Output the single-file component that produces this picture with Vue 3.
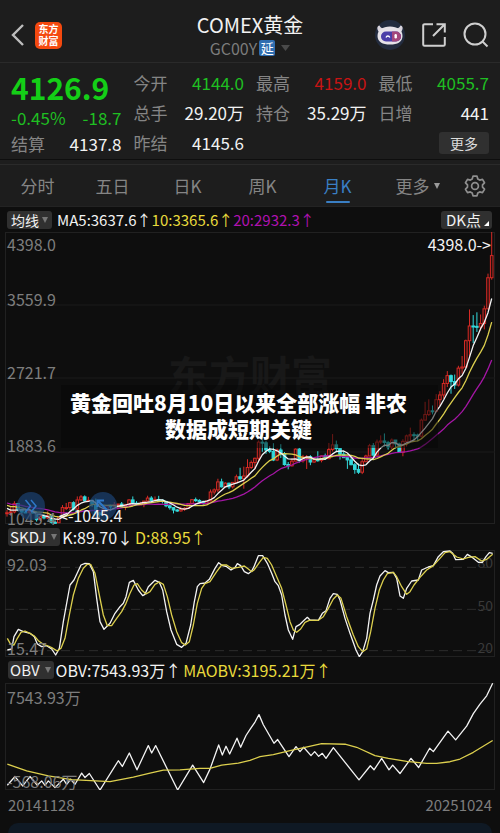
<script setup>
import { computed, ref } from 'vue'

const quoteColumns = [
  [
    { label: '今开', value: '4144.0', tone: 'down' },
    { label: '总手', value: '29.20万', tone: 'plain' },
    { label: '昨结', value: '4145.6', tone: 'plain' },
  ],
  [
    { label: '最高', value: '4159.0', tone: 'up' },
    { label: '持仓', value: '35.29万', tone: 'plain' },
  ],
  [
    { label: '最低', value: '4055.7', tone: 'down' },
    { label: '日增', value: '441', tone: 'plain' },
  ],
]

const tabs = ['分时', '五日', '日K', '周K', '月K']
const activeTab = ref('月K')

const PRICE_MAX = 4398
const PRICE_MIN = 1045.4
const CHART_HEIGHT = 292
const CANDLE_STEP = 3.7

// Closes before the first visible month, needed by the moving averages
const history = [
  1472, 1393, 1224, 1312, 1396, 1327, 1324, 1251, 1202, 1240,
  1321, 1284, 1296, 1246, 1322, 1281, 1285, 1211, 1171,
]

// Monthly [close, high, low]
const months = [
  [1175, 1208, 1130], [1184, 1239, 1141],
  [1279, 1307, 1167], [1213, 1286, 1190], [1183, 1223, 1141], [1182, 1224, 1175],
  [1190, 1232, 1162], [1172, 1205, 1162], [1095, 1188, 1073], [1133, 1170, 1080],
  [1115, 1157, 1098], [1141, 1191, 1103], [1065, 1146, 1051], [1060, 1088, 1045.4],
  [1118, 1128, 1061], [1234, 1263, 1115], [1234, 1287, 1206], [1290, 1299, 1205],
  [1217, 1306, 1199], [1322, 1362, 1199], [1357, 1377, 1310], [1311, 1374, 1301],
  [1317, 1357, 1305], [1273, 1322, 1243], [1173, 1338, 1170], [1152, 1188, 1123],
  [1211, 1220, 1146], [1253, 1264, 1200], [1249, 1264, 1194], [1268, 1297, 1240],
  [1275, 1275, 1214], [1242, 1298, 1236], [1270, 1270, 1204], [1322, 1331, 1252],
  [1284, 1362, 1281], [1270, 1308, 1262], [1276, 1301, 1264], [1309, 1309, 1238],
  [1343, 1370, 1305], [1317, 1365, 1307], [1327, 1362, 1303], [1319, 1369, 1301],
  [1304, 1328, 1281], [1254, 1313, 1238], [1233, 1266, 1210], [1206, 1226, 1167],
  [1196, 1218, 1184], [1215, 1246, 1186], [1226, 1239, 1196], [1281, 1284, 1221],
  [1325, 1331, 1277], [1316, 1349, 1300], [1298, 1330, 1281], [1285, 1314, 1267],
  [1311, 1311, 1267], [1413, 1442, 1305], [1437, 1454, 1384], [1529, 1565, 1412],
  [1472, 1566, 1465], [1514, 1525, 1465], [1472, 1519, 1446], [1523, 1528, 1453],
  [1588, 1613, 1519], [1566, 1691, 1551], [1596, 1704, 1451], [1694, 1789, 1576],
  [1751, 1775, 1676], [1800, 1807, 1671], [1985, 2005, 1766], [1978, 2089, 1874],
  [1895, 2001, 1851], [1879, 1939, 1859], [1780, 1973, 1767], [1895, 1912, 1767],
  [1850, 1962, 1804], [1728, 1872, 1715], [1713, 1757, 1673], [1767, 1800, 1706],
  [1905, 1913, 1766], [1771, 1919, 1750], [1817, 1839, 1750], [1818, 1837, 1677],
  [1757, 1836, 1721], [1783, 1815, 1746], [1776, 1881, 1761], [1828, 1833, 1753],
  [1796, 1854, 1780], [1900, 1976, 1788], [1954, 2078, 1878], [1911, 2003, 1870],
  [1848, 1910, 1785], [1807, 1882, 1803], [1781, 1816, 1678], [1726, 1824, 1720],
  [1672, 1746, 1622], [1640, 1739, 1621], [1760, 1792, 1618], [1826, 1841, 1778],
  [1945, 1966, 1826], [1836, 1975, 1810], [1986, 2015, 1813], [1999, 2063, 1965],
  [1982, 2085, 1932], [1929, 2000, 1900], [2009, 2028, 1909], [1965, 2010, 1913],
  [1866, 1980, 1862], [1994, 2019, 1823], [2057, 2072, 1935], [2071, 2152, 1987],
  [2067, 2098, 2004], [2054, 2083, 1996], [2238, 2256, 2039], [2302, 2448, 2249],
  [2345, 2477, 2285], [2339, 2406, 2304], [2473, 2537, 2327], [2527, 2570, 2403],
  [2659, 2708, 2485], [2749, 2801, 2618], [2681, 2762, 2541], [2641, 2761, 2596],
  [2835, 2862, 2624], [2848, 2974, 2770], [3150, 3162, 2844], [3319, 3509, 2970],
  [3315, 3444, 3123], [3307, 3476, 3250], [3348, 3451, 3268], [3516, 3552, 3280],
  [3873, 3920, 3510], [4126.9, 4398, 3850],
]

const toX = (index) => 2 + index * CANDLE_STEP
const toY = (price) => ((PRICE_MAX - price) / (PRICE_MAX - PRICE_MIN)) * CHART_HEIGHT

const closes = [...history, ...months.map(([close]) => close)]

const candles = computed(() =>
  months.map(([close, high, low], i) => {
    const open = closes[history.length + i - 1]
    const top = toY(Math.max(open, close))
    const bottom = toY(Math.min(open, close))
    return {
      x: toX(i),
      high: toY(high),
      low: toY(low),
      top,
      bottom,
      body: Math.max(bottom - top, 1),
      rising: close >= open,
    }
  }),
)

const movingAverage = (size) =>
  months
    .map((_, i) => {
      const end = history.length + i + 1
      const slice = closes.slice(end - size, end)
      const mean = slice.reduce((sum, n) => sum + n, 0) / size
      return `${toX(i).toFixed(1)},${toY(mean).toFixed(1)}`
    })
    .join(' ')

const averages = [
  { name: 'violet', points: movingAverage(20) },
  { name: 'yellow', points: movingAverage(10) },
  { name: 'white', points: movingAverage(5) },
]

const kLine =
  '22,375 35,372 42,335 55,313 70,320 90,325 103,335 112,357 125,365 140,362 155,372 167,390 178,370 190,290 210,180 222,165 243,120 255,115 268,116 280,140 290,220 300,290 312,313 330,295 345,265 360,245 370,235 378,215 388,172 400,166 415,195 428,212 435,208 445,185 465,166 478,172 488,195 500,260 513,315 530,358 545,367 558,355 572,300 583,230 592,185 600,176 615,174 628,163 645,130 656,113 668,122 680,125 693,135 705,128 712,116 722,122 733,140 745,146 755,138 762,125 775,92 788,92 802,115 815,145 825,170 835,182 845,210 855,270 865,315 878,343 888,305 900,298 910,288 922,277 930,285 955,286 967,265 978,257 990,220 1000,206 1012,208 1020,225 1035,280 1050,325 1068,375 1078,395 1088,380 1100,340 1110,265 1120,225 1130,180 1140,153 1155,137 1165,143 1180,142 1190,160 1200,213 1210,220 1220,190 1235,168 1255,165 1265,135 1285,126 1300,122 1315,95 1330,80 1350,78 1358,85 1367,104 1390,103 1402,88 1418,98 1435,112 1447,112 1458,95 1468,83 1478,85'
const dLine =
  '22,340 32,358 42,360 52,340 63,322 75,318 90,325 103,333 115,347 130,358 145,363 155,368 172,378 183,370 195,340 208,270 220,210 235,160 250,130 262,118 272,118 285,145 298,210 310,270 322,302 335,302 350,280 365,260 378,235 390,205 402,180 412,176 425,195 438,207 450,200 465,178 478,171 490,178 502,215 515,270 530,320 545,353 556,360 568,350 580,300 592,235 605,190 615,176 630,170 650,140 665,120 680,120 695,130 715,127 733,123 745,132 755,140 762,135 780,110 790,97 802,100 815,120 830,155 845,190 858,240 870,290 880,315 890,322 902,312 915,292 928,286 955,286 970,275 985,250 1000,222 1012,210 1023,220 1040,275 1060,330 1075,365 1088,380 1100,372 1112,320 1125,250 1138,195 1150,165 1162,146 1180,142 1190,155 1205,185 1220,208 1230,200 1242,180 1260,157 1280,135 1300,122 1320,100 1335,83 1350,80 1370,96 1390,102 1405,97 1425,95 1445,108 1460,103 1478,88'
const obvLine =
  '22,388 45,362 68,390 90,362 112,388 125,375 135,388 145,375 165,395 190,370 200,385 212,370 225,385 245,352 255,365 268,353 300,402 355,315 367,332 388,292 411,342 445,270 455,292 467,270 533,402 578,328 611,380 630,340 656,268 667,298 678,272 689,295 711,248 722,275 738,240 750,222 765,200 777,178 790,208 822,263 833,252 867,303 888,273 900,288 911,275 933,300 944,288 956,302 967,293 978,308 1000,276 1077,372 1111,330 1122,342 1145,308 1167,342 1178,328 1200,353 1233,308 1256,335 1289,278 1300,288 1344,227 1367,253 1400,212 1420,175 1440,147 1460,122 1478,85'
const maObvLine =
  '22,325 80,345 145,360 215,371 330,377 400,364 450,352 490,343 540,342 600,338 630,338 665,328 715,322 750,314 780,303 820,297 870,285 925,273 965,264 1035,266 1070,275 1125,300 1165,308 1220,317 1280,323 1310,323 1350,318 1380,310 1420,290 1478,255'
</script>

<template>
  <main class="page">
    <header class="header">
      <div class="header__side">
        <button class="icon-button" type="button" aria-label="返回">
          <svg width="14" height="24" viewBox="0 0 14 24">
            <path d="M12 2 2 12l10 10" fill="none" stroke="#bdbdbd" stroke-width="2.4" />
          </svg>
        </button>
        <div class="logo"><span>东方</span><span>财富</span></div>
      </div>
      <div class="header__center">
        <h1 class="header__title">COMEX黄金</h1>
        <div class="header__code">
          <span>GC00Y</span>
          <span class="header__badge">延</span>
          <svg class="header__caret" width="9" height="6" viewBox="0 0 9 6">
            <path d="M0 0h9L4.5 6z" fill="#4a4a4a" />
          </svg>
        </div>
      </div>
      <div class="header__side header__side--right">
        <button class="icon-button" type="button" aria-label="助手">
          <svg width="30" height="30" viewBox="0 0 30 30">
            <circle cx="15" cy="15" r="15" fill="#232c3f" />
            <path d="M4 12C1.500 9 2 6 4.500 5.500c1 2.500 3 3 5.500 3M26 12c2.500-3 2-6-.5-6.500-1 2.500-3 3-5.500 3" fill="#d9d4dc" />
            <path d="M15 6.500c7.500 0 12.500 3.500 12.500 9.500 0 6-5 8.500-12.500 8.500S2.500 22 2.500 16C2.500 10 7.500 6.500 15 6.500z" fill="#e6e2e8" />
            <rect x="6" y="11.500" width="20" height="10" rx="5" fill="#4a3da8" />
            <path d="M17 11.500h4a5 5 0 0 1 0 10h-4z" fill="#a3477c" />
            <path d="M11 17.500c.8-2 3-2 3.800 0" fill="none" stroke="#fff" stroke-width="1.3" />
            <rect x="19.500" y="14" width="2.400" height="4.500" rx="1.200" fill="#fff" />
          </svg>
        </button>
        <button class="icon-button" type="button" aria-label="分享">
          <svg width="24" height="24" viewBox="0 0 24 24" fill="none" stroke="#cfcfcf" stroke-width="2">
            <path d="M11 1.200H2.500a1.300 1.300 0 0 0-1.300 1.300v19a1.300 1.300 0 0 0 1.300 1.300h19a1.300 1.300 0 0 0 1.300-1.300V14M14.500 1.200h8.300v8.300M22.500 1.500 11 13" />
          </svg>
        </button>
        <button class="icon-button" type="button" aria-label="搜索">
          <svg width="26" height="26" viewBox="0 0 26 26" fill="none" stroke="#cfcfcf" stroke-width="2">
            <circle cx="12" cy="12" r="10.5" />
            <path d="m19.500 19.500 5 5" />
          </svg>
        </button>
      </div>
    </header>

    <section class="quote">
      <div class="quote__column">
        <strong class="quote__price">4126.9</strong>
        <div class="quote__change"><span>-0.45%</span><span>-18.7</span></div>
        <div class="quote__row">
          <span class="quote__label">结算</span>
          <span class="quote__value quote__value--plain">4137.8</span>
        </div>
      </div>
      <div v-for="(column, i) in quoteColumns" :key="i" class="quote__column">
        <div v-for="item in column" :key="item.label" class="quote__row">
          <span class="quote__label">{{ item.label }}</span>
          <span :class="['quote__value', `quote__value--${item.tone}`]">{{ item.value }}</span>
        </div>
        <div v-if="i === 2" class="quote__row quote__row--end">
          <button class="quote__more" type="button">更多</button>
        </div>
      </div>
    </section>

    <nav class="tabs">
      <button
        v-for="tab in tabs"
        :key="tab"
        type="button"
        :class="['tabs__item', { 'tabs__item--active': tab === activeTab }]"
        @click="activeTab = tab"
      >
        {{ tab }}
      </button>
      <button class="tabs__item tabs__item--more" type="button">
        更多
        <svg width="6" height="6" viewBox="0 0 6 6"><path d="M0 0h6L3 6z" fill="#9a9a9a" /></svg>
      </button>
      <button class="tabs__settings" type="button" aria-label="设置">
        <svg width="22" height="22" viewBox="0 0 22 22" fill="none" stroke="#8f8f8f" stroke-width="1.7" stroke-linejoin="round">
          <path d="M9 1.200h4l.8 2.800 1.900 1.100 2.800-.7 2 3.400-2 2.100v2.200l2 2.100-2 3.400-2.800-.7-1.900 1.100-.8 2.800H9L8.200 18l-1.900-1.100-2.800.7-2-3.400 2-2.100V9.900l-2-2.100 2-3.400 2.800.7L8.200 4z" />
          <circle cx="11" cy="11" r="3.4" />
        </svg>
      </button>
    </nav>

    <section class="charts">
      <div class="legend legend--main">
        <button class="chip" type="button">
          均线<svg width="6" height="6" viewBox="0 0 6 6"><path d="M0 0h6L3 6z" fill="#777" /></svg>
        </button>
        <span class="legend__values">
          <span>MA5:3637.6↑</span><span class="is-yellow">10:3365.6↑</span><span class="is-violet">20:2932.3↑</span>
        </span>
        <button class="chip chip--corner" type="button">
          DK点<svg width="5" height="5" viewBox="0 0 5 5"><path d="M5 0v5H0z" fill="#fff" /></svg>
        </button>
      </div>

      <div class="pane pane--price">
        <span class="watermark">东方财富</span>
        <svg class="plot" viewBox="0 0 490 292" preserveAspectRatio="none">
          <path class="grid-line" d="M0 73h490M0 146h490M0 220h490" />
          <g v-for="(c, i) in candles" :key="i" :class="c.rising ? 'candle-up' : 'candle-down'">
            <path :d="`M${c.x} ${c.high}V${c.top}M${c.x} ${c.bottom}V${c.low}`" />
            <rect :x="c.x - 1.3" :y="c.top" width="2.6" :height="c.body" />
          </g>
          <polyline
            v-for="line in averages"
            :key="line.name"
            :class="['line', `line--${line.name}`]"
            :points="line.points"
          />
        </svg>
        <span class="axis-top">4398.0</span>
        <div class="axis">
          <span>3559.9</span>
          <span>2721.7</span>
          <span>1883.6</span>
          <span>1045.4</span>
        </div>
        <span class="mark mark--high">4398.0-&gt;</span>
        <button class="round round--forward" type="button" aria-label="快进">
          <svg width="14" height="14" viewBox="0 0 14 14" fill="none" stroke="#2e78c8" stroke-width="1.5">
            <path d="m1.500 1 5 6-5 6M7 1l5 6-5 6" />
          </svg>
        </button>
        <button class="round round--expand" type="button" aria-label="展开">
          <svg width="14" height="14" viewBox="0 0 14 14" fill="none" stroke="#2e78c8" stroke-width="2">
            <path d="M1.500 8V1.500H8M2 2l9 9" />
          </svg>
        </button>
        <span class="mark mark--low">&lt;-1045.4</span>
        <p class="caption">黄金回吐8月10日以来全部涨幅 非农<br />数据成短期关键</p>
      </div>

      <div class="legend">
        <button class="chip chip--wide" type="button">
          SKDJ<svg width="6" height="6" viewBox="0 0 6 6"><path d="M0 0h6L3 6z" fill="#777" /></svg>
        </button>
        <span class="legend__values legend__values--spaced">
          <span>K:89.70↓</span><span class="is-yellow">D:88.95↑</span>
        </span>
      </div>
      <div class="pane pane--sub">
        <div class="axis-right"><span>80</span><span>50</span><span>20</span></div>
        <svg class="plot" viewBox="15 75 1470 321" preserveAspectRatio="none">
          <path class="grid-line grid-line--dashed" d="M15 127h1470M15 253h1470M15 377h1470" />
          <polyline class="line line--white" :points="kLine" />
          <polyline class="line line--yellow" :points="dLine" />
        </svg>
        <span class="axis-top">92.03</span>
        <span class="axis-bottom">15.47</span>
      </div>

      <div class="legend">
        <button class="chip chip--wide" type="button">
          OBV<svg width="6" height="6" viewBox="0 0 6 6"><path d="M0 0h6L3 6z" fill="#777" /></svg>
        </button>
        <span class="legend__values legend__values--spaced">
          <span>OBV:7543.93万↑</span><span class="is-yellow">MAOBV:3195.21万↑</span>
        </span>
      </div>
      <div class="pane pane--sub">
        <svg class="plot" viewBox="15 84 1470 318" preserveAspectRatio="none">
          <polyline class="line line--white" :points="obvLine" />
          <polyline class="line line--yellow" :points="maObvLine" />
        </svg>
        <span class="axis-top">7543.93万</span>
        <span class="axis-bottom">-568.06万</span>
      </div>

      <div class="dates"><span>20141128</span><span>20251024</span></div>
    </section>

    <div class="sheet"></div>
  </main>
</template>

<style>
body {
  background: #0e0e0e;
}
</style>

<style scoped>
.page {
  display: flex;
  flex-direction: column;
  min-height: 100vh;
  overflow: hidden;
  background: #0e0e0e;
  color: #f2f2f2;
  font-family: 'Noto Sans CJK SC', 'Noto Sans', sans-serif;
}

button {
  margin: 0;
  padding: 0;
  border: none;
  background: none;
  color: inherit;
  font: inherit;
  cursor: pointer;
}

svg {
  display: block;
}

.header {
  display: grid;
  grid-template-columns: 1fr auto 1fr;
  align-items: center;
  height: 54px;
  padding: 8px 11px 0;
  border-bottom: 1px solid #2a2a2a;
  background: #1d1d1d;
}

.header__side {
  display: flex;
  align-items: center;
  gap: 10px;
}

.header__side--right {
  justify-content: flex-end;
  gap: 17px;
}

.icon-button {
  display: flex;
}

.logo {
  display: flex;
  flex-direction: column;
  align-items: center;
  justify-content: center;
  width: 27px;
  height: 27px;
  border-radius: 5px;
  background: #f4490f;
  color: #fff;
  font-size: 10px;
  font-weight: 700;
  line-height: 12px;
}

.header__center {
  text-align: center;
}

.header__title {
  margin: 0;
  font-size: 20px;
  font-weight: 400;
  line-height: 26px;
}

.header__code {
  display: flex;
  align-items: center;
  justify-content: center;
  gap: 2px;
  color: #7c7c7c;
  font-size: 16px;
  line-height: 20px;
}

.header__badge {
  width: 16px;
  border-radius: 2px;
  background: #2f6db0;
  color: #fff;
  font-size: 13px;
  line-height: 16px;
}

.header__caret {
  margin-left: 4px;
}

.quote {
  display: grid;
  grid-template-columns: repeat(4, 1fr);
  gap: 12px;
  padding: 5px 11px 0;
  border-bottom: 1px solid #0e0e0e;
  background: #1d1d1d;
  font-size: 17px;
}

.quote__column {
  display: flex;
  flex-direction: column;
}

.quote__price {
  color: #14cf17;
  font-size: 30px;
  font-weight: 700;
  line-height: 38px;
}

.quote__change {
  display: flex;
  justify-content: space-between;
  color: #1fbf22;
  line-height: 23px;
}

.quote__row {
  display: flex;
  align-items: center;
  justify-content: space-between;
  line-height: 30px;
}

.quote__row--end {
  justify-content: flex-end;
  height: 30px;
}

.quote__label {
  color: #858585;
}

.quote__value--plain {
  color: #f2f2f2;
}

.quote__value--up {
  color: #c81414;
}

.quote__value--down {
  color: #1fbf22;
}

.quote__more {
  width: 50px;
  border-radius: 3px;
  background: #303030;
  color: #dcdcdc;
  font-size: 14px;
  line-height: 22px;
}

.tabs {
  display: grid;
  grid-template-columns: repeat(5, 15fr) 17fr 8fr;
  margin-top: 4px;
  border-top: 1px solid #2a2a2a;
  border-bottom: 1px solid #232323;
  background: #1d1d1d;
  box-shadow: 0 -4px #1d1d1d;
}

.tabs__item {
  display: flex;
  flex-direction: column;
  align-items: center;
  color: #858585;
  font-size: 17px;
  line-height: 41px;
}

.tabs__item--active {
  color: #3a7fc4;
}

.tabs__item--active::after {
  content: '';
  width: 24px;
  height: 2px;
  margin-top: -5px;
  border-radius: 1px;
  background: #3a7fc4;
}

.tabs__item--more {
  flex-direction: row;
  justify-content: center;
  gap: 4px;
}

.tabs__settings {
  display: flex;
  align-items: center;
  padding-left: 4px;
}

.charts {
  padding: 0 5px;
}

.legend {
  display: flex;
  align-items: center;
  gap: 2px;
  height: 26px;
  padding: 0 3px;
  font-size: 16px;
}

.legend--main {
  gap: 5px;
  height: 25px;
  padding: 0 3px 0 2px;
  font-size: 15px;
}

.legend__values {
  display: flex;
  flex: 1;
  line-height: 20px;
  white-space: nowrap;
}

.legend__values--spaced {
  gap: 2px;
}

.is-yellow {
  color: #e8da3c;
}

.is-violet {
  color: #b012b0;
}

.chip {
  display: flex;
  align-items: center;
  gap: 3px;
  padding: 0 4px;
  border-radius: 3px;
  background: #303030;
  font-size: 14px;
  line-height: 18px;
}

.chip--wide {
  gap: 5px;
  padding: 0 3px 0 2px;
  font-size: 15px;
}

.chip--corner {
  align-items: flex-end;
  padding: 0 3px 0 5px;
  font-size: 15px;
}

.chip--corner svg {
  margin-bottom: 3px;
}

.pane {
  position: relative;
  display: grid;
  box-sizing: border-box;
  box-shadow: inset 0 0 0 1px #212121;
  color: #7d7d7d;
  font-size: 16px;
  line-height: 12px;
}

.pane > .plot,
.pane > .axis,
.pane > .axis-top,
.pane > .axis-bottom,
.pane > .axis-right,
.pane > .watermark {
  grid-area: 1 / 1;
}

.pane--price {
  height: 292px;
}

.pane--sub {
  height: 107px;
}

.plot {
  width: 100%;
  height: 100%;
  min-height: 0;
}

.grid-line {
  fill: none;
  stroke: #1b1b1b;
  vector-effect: non-scaling-stroke;
}

.grid-line--dashed {
  stroke: #2c2c2c;
  stroke-dasharray: 9 5;
}

.line {
  fill: none;
  stroke-width: 1.3;
  stroke-linejoin: round;
  vector-effect: non-scaling-stroke;
}

.line--white {
  stroke: #f4f4f4;
}

.line--yellow {
  stroke: #dccf4e;
}

.line--violet {
  stroke: #a516a5;
}

.candle-up {
  fill: #2a0f0e;
  stroke: #d62a25;
}

.candle-down {
  fill: #33dadc;
  stroke: #33dadc;
}

.watermark {
  align-self: center;
  justify-self: center;
  padding-bottom: 10px;
  color: #181818;
  font-size: 41px;
  font-weight: 700;
  line-height: 44px;
}

.axis {
  display: grid;
  grid-template-rows: repeat(4, 1fr);
  align-items: end;
  padding-left: 2px;
}

.axis-top {
  align-self: start;
  padding: 6px 0 0 2px;
}

.pane--sub .axis-top {
  padding-top: 8px;
}

.axis-bottom {
  align-self: end;
  padding: 0 0 3px 2px;
}

.axis-right {
  display: flex;
  flex-direction: column;
  justify-content: space-between;
  justify-self: end;
  padding: 6px 2px 4px 0;
  color: #3a3a3a;
  font-size: 14px;
}

.mark {
  position: absolute;
  color: #f2f2f2;
}

.mark--high {
  top: 6px;
  right: 4px;
}

.mark--low {
  bottom: 3px;
  left: 54px;
}

.round {
  position: absolute;
  bottom: 4px;
  display: flex;
  align-items: center;
  justify-content: center;
  width: 28px;
  height: 28px;
  border-radius: 50%;
  background: rgba(27, 66, 114, 0.7);
}

.round--forward {
  left: 12px;
}

.round--expand {
  left: 84px;
}

.caption {
  position: absolute;
  top: 153px;
  left: 56px;
  right: 57px;
  margin: 0;
  padding: 4px 22px 7px 0;
  background: rgba(5, 5, 5, 0.5);
  color: #fff;
  font-size: 21px;
  font-weight: 900;
  line-height: 26px;
  text-align: center;
  white-space: nowrap;
}

.dates {
  display: flex;
  justify-content: space-between;
  padding: 0 3px 4px;
  color: #7d7d7d;
  font-size: 15px;
  line-height: 29px;
}

.sheet {
  flex: 1;
  min-height: 10px;
  margin: 0 8px;
  border-radius: 20px 20px 0 0;
  background: #0f1924;
}
</style>
